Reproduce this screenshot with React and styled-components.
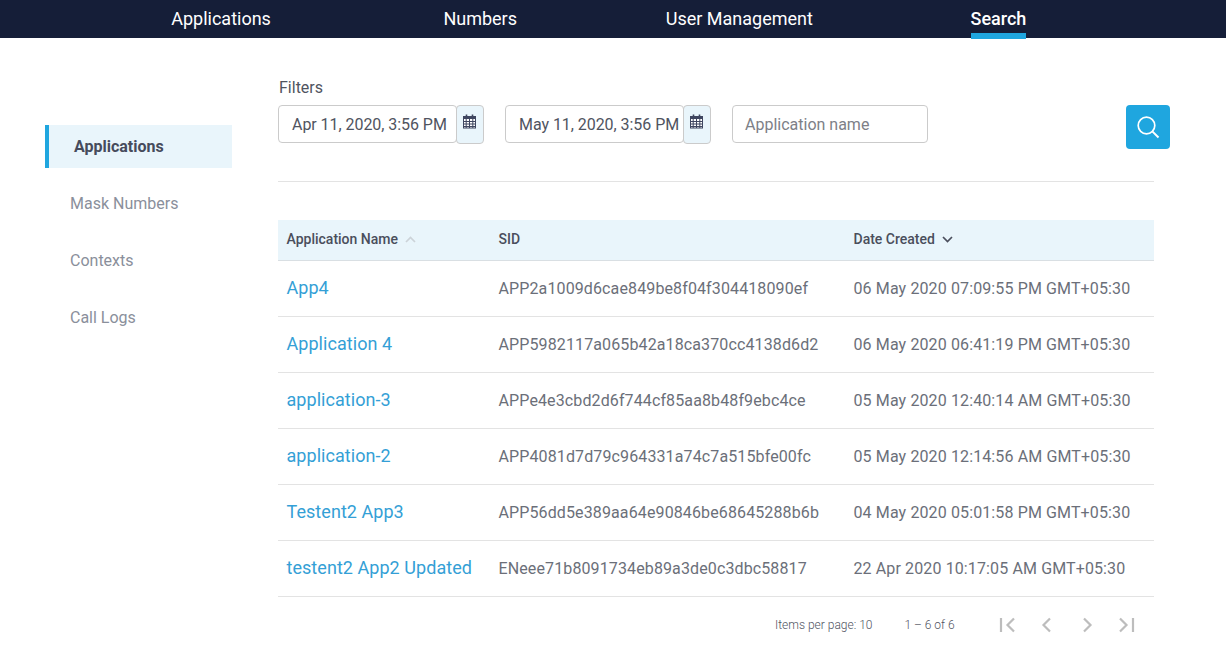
import styled, { createGlobalStyle } from "styled-components";

const GlobalStyle = createGlobalStyle`
  html, body {
    margin: 0;
    padding: 0;
    background: #fff;
    font-family: Roboto, "Liberation Sans", sans-serif;
  }
`;

const Page = styled.div`
  width: 1226px;
  height: 652px;
  overflow: hidden;
`;

const TopNav = styled.nav`
  height: 38px;
  background: #151e38;
  padding: 0 98px 0 91.5px;
  display: grid;
  grid-template-columns: repeat(4, 1fr);
`;

const NavCell = styled.div`
  display: flex;
  justify-content: center;
`;

const NavLink = styled.a`
  position: relative;
  color: #fff;
  font-size: 18px;
  line-height: 38px;
  font-weight: ${(p) => (p.$active ? 500 : 400)};

  ${(p) =>
    p.$active &&
    `&::after {
      content: "";
      position: absolute;
      left: 0;
      right: 0;
      top: 33px;
      height: 6px;
      background: #1fa6df;
    }`}
`;

const Body = styled.div`
  display: flex;
  align-items: flex-start;
  padding-left: 45px;
`;

const Sidebar = styled.aside`
  width: 187px;
  margin-top: 87px;
  margin-right: 46px;
  flex-shrink: 0;
`;

const SideItem = styled.div`
  height: ${(p) => (p.$active ? 43 : 57)}px;
  display: flex;
  align-items: center;
  padding-left: 25px;
  font-size: 16px;
  font-weight: ${(p) => (p.$active ? 700 : 400)};
  color: ${(p) => (p.$active ? "#464b5c" : "#8a8f9b")};
  background: ${(p) => (p.$active ? "#e9f5fb" : "transparent")};
  border-left: ${(p) => (p.$active ? "4px solid #1fa6df" : "none")};
  margin-bottom: ${(p) => (p.$active ? 7 : 0)}px;
`;

const Main = styled.main`
  width: 876px;
  padding-top: 40px;
`;

const FilterLabel = styled.div`
  font-size: 16px;
  line-height: 19px;
  color: #50545f;
  margin: 0 0 8px 1px;
`;

const FilterRow = styled.div`
  position: relative;
  display: flex;
  gap: 21px;
  height: 76px;
  border-bottom: 1px solid #e3e3e3;
`;

const DateGroup = styled.div`
  display: flex;
  align-items: flex-start;
`;

const TextBox = styled.div`
  box-sizing: border-box;
  width: ${(p) => p.$width}px;
  height: 38px;
  border: 1px solid #cbcbcb;
  border-radius: 4px;
  padding-left: ${(p) => (p.$placeholder ? 12 : 13)}px;
  font-size: 16px;
  line-height: 38px;
  letter-spacing: ${(p) => (p.$placeholder ? 0 : -0.05)}px;
  white-space: nowrap;
  overflow: hidden;
  color: ${(p) => (p.$placeholder ? "#7d8087" : "#50545f")};
`;

const CalendarButton = styled.div`
  box-sizing: border-box;
  width: 28px;
  height: 39px;
  margin-left: -1px;
  background: #e9f5fb;
  border: 1px solid #cbcbcb;
  border-radius: 4px;
  display: flex;
  justify-content: center;
  padding: 8px 2px 0 0;
`;

const SearchButton = styled.button`
  position: absolute;
  left: 848px;
  top: 0;
  width: 44px;
  height: 44px;
  padding: 0;
  border: none;
  border-radius: 4px;
  background: #1fa6df;
  display: flex;
  align-items: center;
  justify-content: center;
`;

const Table = styled.div`
  margin-top: 38px;
`;

const HeaderRow = styled.div`
  display: grid;
  grid-template-columns: 212px 355px 1fr;
  height: 38px;
  align-items: center;
  background: #e9f5fb;
  border-bottom: 1px solid #d9dfe3;
  padding: 0 0 2px 8.5px;
`;

const HeaderCell = styled.div`
  display: flex;
  align-items: center;
  gap: 7px;
  font-size: 14px;
  font-weight: 500;
  color: #4a4e5c;
`;

const Row = styled.div`
  display: grid;
  grid-template-columns: 212px 355px 1fr;
  height: 53px;
  align-items: center;
  border-bottom: 1px solid #e3e3e3;
  padding: 0 0 2px 8.5px;
`;

const AppLink = styled.a`
  font-size: 18px;
  letter-spacing: 0.05px;
  color: #349fd6;
  white-space: nowrap;
`;

const Cell = styled.div`
  font-size: 16px;
  letter-spacing: 0.12px;
  padding-top: 2px;
  color: #6b6f79;
  white-space: nowrap;
`;

const Pager = styled.div`
  display: flex;
  align-items: center;
  height: 56px;
  font-size: 12px;
  font-weight: 300;
  color: #50545f;
  padding-left: 497px;
`;

const PagerText = styled.span`
  margin-right: ${(p) => p.$gap}px;
  white-space: nowrap;
`;

const PagerIcons = styled.div`
  display: flex;
  gap: 19.5px;
`;

const CalendarIcon = () => (
  <svg width="13" height="15" viewBox="0 0 13 15" fill="none">
    <rect x="0.5" y="2.5" width="12" height="11.5" fill="#fff" stroke="#3f4660" />
    <rect x="0" y="2" width="13" height="3" fill="#3f4660" />
    <path d="M3.5 0.5v3M9.5 0.5v3" stroke="#3f4660" strokeWidth="1.6" />
    <path d="M0 7.5h13M0 10h13M0 12.5h13M3.2 5v9M6.5 5v9M9.8 5v9" stroke="#3f4660" />
  </svg>
);

const SearchIcon = () => (
  <svg width="24" height="24" viewBox="0 0 24 24" fill="none" stroke="#fff">
    <circle cx="10.5" cy="10.5" r="8.3" strokeWidth="1.7" />
    <path d="M16.6 16.6L22.5 22.5" strokeWidth="2" />
  </svg>
);

const SortIcon = ({ up, color }) => (
  <svg width="11" height="7" viewBox="0 0 11 7" fill="none" stroke={color} strokeWidth="1.7">
    <path d={up ? "M1 6l4.5-4.5L10 6" : "M1 1l4.5 4.5L10 1"} />
  </svg>
);

const PagerIcon = ({ d }) => (
  <svg width="20" height="20" viewBox="0 0 20 20" fill="none" stroke="#bdbdbd" strokeWidth="2.2">
    <path d={d} />
  </svg>
);

const navItems = ["Applications", "Numbers", "User Management", "Search"];
const sideItems = ["Applications", "Mask Numbers", "Contexts", "Call Logs"];
const rows = [
  ["App4", "APP2a1009d6cae849be8f04f304418090ef", "06 May 2020 07:09:55 PM GMT+05:30"],
  ["Application 4", "APP5982117a065b42a18ca370cc4138d6d2", "06 May 2020 06:41:19 PM GMT+05:30"],
  ["application-3", "APPe4e3cbd2d6f744cf85aa8b48f9ebc4ce", "05 May 2020 12:40:14 AM GMT+05:30"],
  ["application-2", "APP4081d7d79c964331a74c7a515bfe00fc", "05 May 2020 12:14:56 AM GMT+05:30"],
  ["Testent2 App3", "APP56dd5e389aa64e90846be68645288b6b", "04 May 2020 05:01:58 PM GMT+05:30"],
  ["testent2 App2 Updated", "ENeee71b8091734eb89a3de0c3dbc58817", "22 Apr 2020 10:17:05 AM GMT+05:30"],
];
const pagerPaths = [
  "M3 3v14M16 3.5L9.5 10l6.5 6.5",
  "M13 3.5L6.5 10l6.5 6.5",
  "M7 3.5l6.5 6.5L7 16.5",
  "M4 3.5l6.5 6.5L4 16.5M17 3v14",
];

const App = () => {
  return (
    <Page>
      <GlobalStyle />
      <TopNav>
        {navItems.map((item) => (
          <NavCell key={item}>
            <NavLink $active={item === "Search"}>{item}</NavLink>
          </NavCell>
        ))}
      </TopNav>
      <Body>
        <Sidebar>
          {sideItems.map((item) => (
            <SideItem key={item} $active={item === "Applications"}>
              {item}
            </SideItem>
          ))}
        </Sidebar>
        <Main>
          <FilterLabel>Filters</FilterLabel>
          <FilterRow>
            <DateGroup>
              <TextBox $width={179}>Apr 11, 2020, 3:56 PM</TextBox>
              <CalendarButton>
                <CalendarIcon />
              </CalendarButton>
            </DateGroup>
            <DateGroup>
              <TextBox $width={179}>May 11, 2020, 3:56 PM</TextBox>
              <CalendarButton>
                <CalendarIcon />
              </CalendarButton>
            </DateGroup>
            <TextBox $width={196} $placeholder>
              Application name
            </TextBox>
            <SearchButton>
              <SearchIcon />
            </SearchButton>
          </FilterRow>
          <Table>
            <HeaderRow>
              <HeaderCell>
                Application Name <SortIcon up color="#ccd3d8" />
              </HeaderCell>
              <HeaderCell>SID</HeaderCell>
              <HeaderCell>
                Date Created <SortIcon color="#4a4e5c" />
              </HeaderCell>
            </HeaderRow>
            {rows.map(([name, sid, date]) => (
              <Row key={sid}>
                <AppLink>{name}</AppLink>
                <Cell>{sid}</Cell>
                <Cell>{date}</Cell>
              </Row>
            ))}
          </Table>
          <Pager>
            <PagerText $gap={32}>Items per page: 10</PagerText>
            <PagerText $gap={43}>1 – 6 of 6</PagerText>
            <PagerIcons>
              {pagerPaths.map((d) => (
                <PagerIcon key={d} d={d} />
              ))}
            </PagerIcons>
          </Pager>
        </Main>
      </Body>
    </Page>
  );
};

export default App;
